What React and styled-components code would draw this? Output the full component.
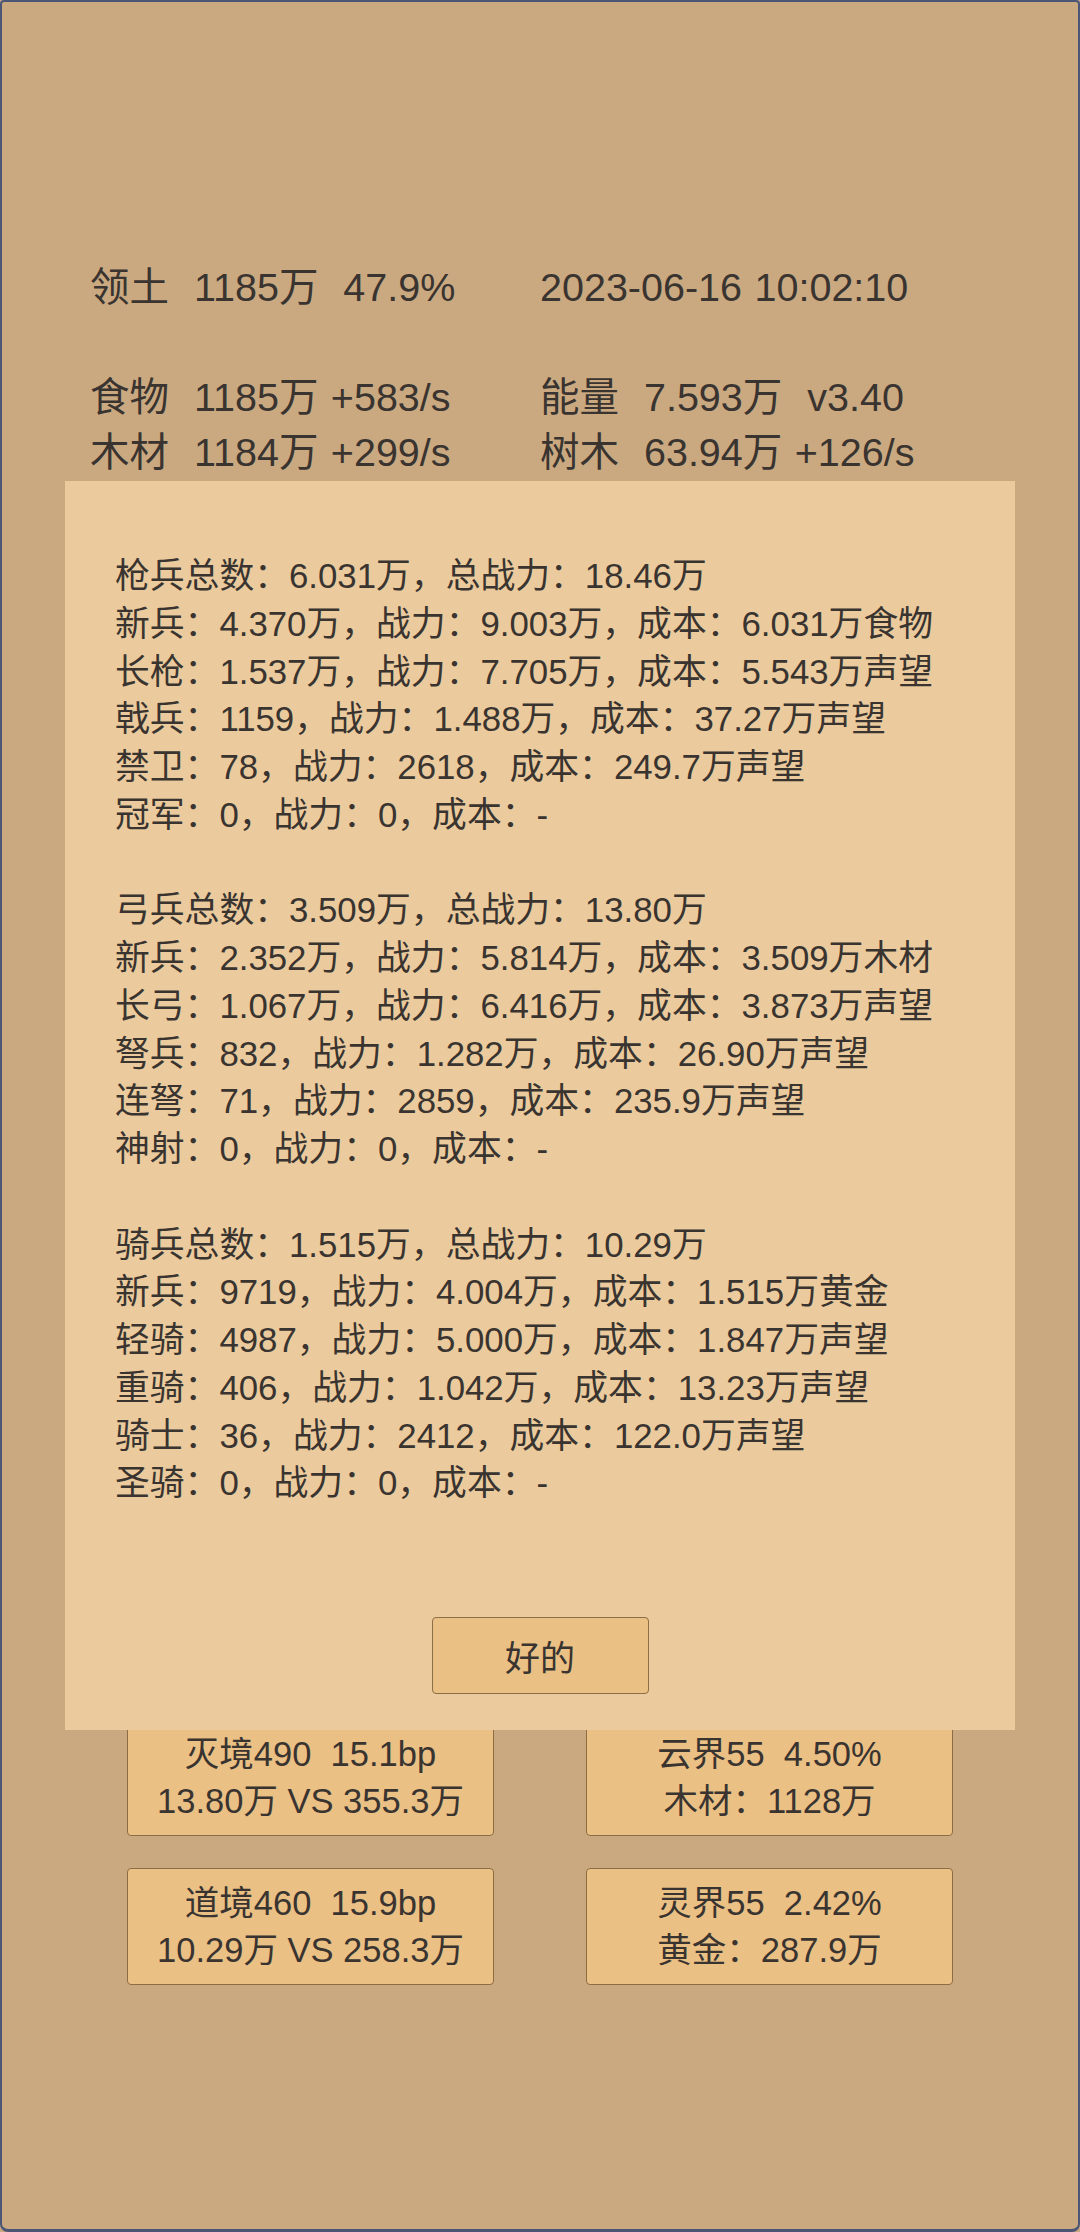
import React from 'react';
import styled, { createGlobalStyle } from 'styled-components';

const GlobalStyle = createGlobalStyle`
  html, body {
    margin: 0;
    padding: 0;
    background: #caa981;
  }
  body {
    font-family: "Liberation Sans", "Noto Sans CJK SC", sans-serif;
    color: #3a3430;
  }
`;

const Frame = styled.div`
  position: relative;
  box-sizing: border-box;
  height: 2232px;
  border: 2px solid #4b5677;
  border-bottom-width: 3px;
  border-radius: 4px 4px 8px 8px;
  padding-top: 258px;
  overflow: hidden;
`;

const StatGrid = styled.div`
  display: grid;
  grid-template-columns: 450px 450px;
  padding: 0 88px;
  font-size: 39.5px;
  line-height: 55px;
  word-spacing: 1.5px;
  white-space: pre;
  margin-bottom: ${p => (p.$gapAfter ? '55px' : '0')};
`;

const Stat = styled.div``;

const CardGrid = styled.div`
  display: grid;
  grid-template-columns: 367px 367px;
  justify-content: center;
  column-gap: 92px;
  row-gap: 32px;
  margin-top: 1239px;
`;

const Card = styled.div`
  box-sizing: border-box;
  height: 117px;
  border: 1px solid #8c6e46;
  border-radius: 4px;
  background: #ebc085;
  display: flex;
  flex-direction: column;
  align-items: center;
  justify-content: center;
  font-size: 34.5px;
  line-height: 47px;
  white-space: pre;
`;

const Dialog = styled.div`
  position: absolute;
  top: 479px;
  left: 63px;
  width: 950px;
  height: 1249px;
  box-sizing: border-box;
  background: #ebcb9d;
  padding: 71px 50px 36px;
  display: flex;
  flex-direction: column;
`;

const Group = styled.div`
  font-size: 34.8px;
  line-height: 47.75px;
  margin-bottom: 47.75px;
  white-space: pre;
`;

const Line = styled.div``;

const OkButton = styled.button`
  margin-top: auto;
  align-self: center;
  width: 217px;
  height: 77px;
  box-sizing: border-box;
  border: 1px solid #8c6e46;
  border-radius: 4px;
  background: #ebc085;
  color: #3a3430;
  font-family: "Noto Sans CJK SC", sans-serif;
  font-size: 35px;
  padding: 0;
  cursor: pointer;
`;

const troops = [
  [
    '枪兵总数：6.031万，总战力：18.46万',
    '新兵：4.370万，战力：9.003万，成本：6.031万食物',
    '长枪：1.537万，战力：7.705万，成本：5.543万声望',
    '戟兵：1159，战力：1.488万，成本：37.27万声望',
    '禁卫：78，战力：2618，成本：249.7万声望',
    '冠军：0，战力：0，成本：-',
  ],
  [
    '弓兵总数：3.509万，总战力：13.80万',
    '新兵：2.352万，战力：5.814万，成本：3.509万木材',
    '长弓：1.067万，战力：6.416万，成本：3.873万声望',
    '弩兵：832，战力：1.282万，成本：26.90万声望',
    '连弩：71，战力：2859，成本：235.9万声望',
    '神射：0，战力：0，成本：-',
  ],
  [
    '骑兵总数：1.515万，总战力：10.29万',
    '新兵：9719，战力：4.004万，成本：1.515万黄金',
    '轻骑：4987，战力：5.000万，成本：1.847万声望',
    '重骑：406，战力：1.042万，成本：13.23万声望',
    '骑士：36，战力：2412，成本：122.0万声望',
    '圣骑：0，战力：0，成本：-',
  ],
];

const cards = [
  ['灭境490  15.1bp', '13.80万 VS 355.3万'],
  ['云界55  4.50%', '木材：1128万'],
  ['道境460  15.9bp', '10.29万 VS 258.3万'],
  ['灵界55  2.42%', '黄金：287.9万'],
];

export default function App() {
  return (
    <>
      <GlobalStyle />
      <Frame>
        <StatGrid $gapAfter>
          <Stat>领土  1185万  47.9%</Stat>
          <Stat>2023-06-16 10:02:10</Stat>
        </StatGrid>
        <StatGrid>
          <Stat>食物  1185万 +583/s</Stat>
          <Stat>能量  7.593万  v3.40</Stat>
          <Stat>木材  1184万 +299/s</Stat>
          <Stat>树木  63.94万 +126/s</Stat>
        </StatGrid>

        <CardGrid>
          {cards.map((c, i) => (
            <Card key={i}>
              <Line>{c[0]}</Line>
              <Line>{c[1]}</Line>
            </Card>
          ))}
        </CardGrid>

        <Dialog>
          {troops.map((g, i) => (
            <Group key={i}>
              {g.map((l, j) => (
                <Line key={j}>{l}</Line>
              ))}
            </Group>
          ))}
          <OkButton>好的</OkButton>
        </Dialog>
      </Frame>
    </>
  );
}
